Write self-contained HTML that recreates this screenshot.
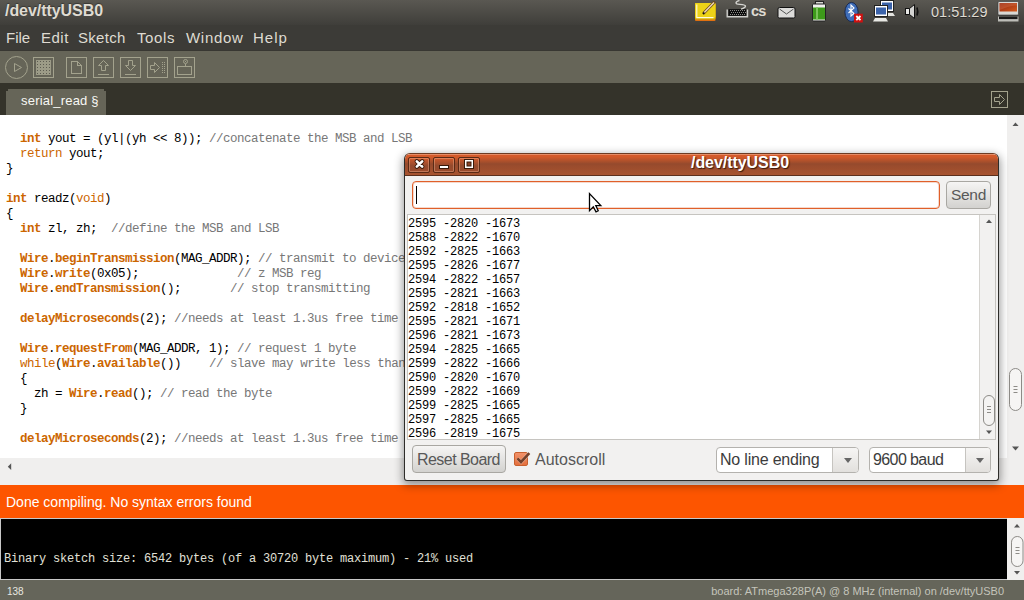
<!DOCTYPE html>
<html><head><meta charset="utf-8">
<style>
*{margin:0;padding:0;box-sizing:border-box}
html,body{width:1024px;height:600px;overflow:hidden;background:#fff;font-family:"Liberation Sans",sans-serif}
.a{position:absolute}
#panel{left:0;top:0;width:1024px;height:25px;background:linear-gradient(#5a5852,#3f3e3a)}
#menubar{left:0;top:25px;width:1024px;height:26px;background:linear-gradient(#3c3b37 25px,#383732 25px)}
#toolbar{left:0;top:51px;width:1024px;height:32px;background:#666558}
#tabbar{left:0;top:83px;width:1024px;height:32px;background:#34332a}
#tab{left:6px;top:89px;width:100px;height:26px;background:#666558;clip-path:polygon(2px 0,98px 0,98px 2px,100px 2px,100px 26px,0 26px,0 2px,2px 2px)}
#editor{left:0;top:115px;width:1007px;height:343px;background:#fff;overflow:hidden}
#vscroll{left:1007px;top:115px;width:17px;height:370px;background:#f0efee}
#hscroll{left:0;top:458px;width:1007px;height:27px;background:#f0efee}
#status{left:0;top:485px;width:1024px;height:33px;background:#fd5500}
#console{left:0;top:518px;width:1007px;height:62px;background:#000;border:1px solid #c8c8c8;border-right:none}
#cscroll{left:1007px;top:518px;width:17px;height:62px;background:#f0efee}
#sbar{left:0;top:580px;width:1024px;height:20px;background:#65655a}
.t{white-space:pre;position:absolute}
.menu{color:#dfdbd2;font-size:15px;top:29px}
.code{font-family:"Liberation Mono",monospace;font-size:12.5px;letter-spacing:-0.5px;line-height:15px;color:#000}
.kb{color:#cc6600;font-weight:bold}
.kw{color:#cc6600}
.cm{color:#777}

.mono{font-family:"Liberation Mono",monospace;font-size:12px;letter-spacing:-0.2px;color:#000;white-space:pre}
.wb{top:157px;width:22px;height:16px;border:1px solid #5a2a16;border-radius:2px;box-shadow:inset 0 0 0 1px rgba(255,200,170,.35);background:linear-gradient(#d35a2c,#944a2d 55%,#9d4c2d)}
.btn{border:1px solid #a9a7a2;border-radius:4px;background:linear-gradient(#f6f5f4,#d3d2cf)}
.btxt{font-size:14.5px;color:#585858}
.combo{border:1px solid #b4b2ae;border-radius:4px;background:#fff}
.cdiv{border-left:1px solid #c6c4c0;background:linear-gradient(#f6f5f4,#e2e0dd);border-radius:0 3px 3px 0}
.ctxt{font-size:14.5px;color:#3c3c3c}
</style></head><body>
<div id="panel" class="a"></div>
<div class="t" style="left:5px;top:2px;color:#dfdbd2;font-size:16px;font-weight:bold;letter-spacing:-0.05px;text-shadow:0 -1px 1px rgba(0,0,0,.35)">/dev/ttyUSB0</div>

<svg class="a" style="left:690px;top:0" width="334" height="25">
<!-- notes -->
<rect x="5" y="3" width="20.5" height="18" rx="1" fill="#e07010"/>
<rect x="5" y="3" width="20.5" height="16.6" rx="1" fill="#d4b800"/>
<rect x="5" y="3" width="20.5" height="15" rx="1" fill="#ecd318"/>
<path d="M6.8 4.5 V17.6 H23.5" fill="none" stroke="#fffbe0" stroke-width="1.1"/>
<path d="M14 12.8 L24 2.5" stroke="#6b4a1a" stroke-width="3" stroke-linecap="round"/>
<path d="M14 12.8 L24 2.5" stroke="#eed8b8" stroke-width="1.5"/>
<path d="M13 14 L14.3 12.6" stroke="#111" stroke-width="1.5"/>
<!-- keyboard -->
<path d="M37.2 9.5 V16.8 H57.5 V9.5" fill="none" stroke="#d0d0cc" stroke-width="1.4"/>
<rect x="38.5" y="9.2" width="17.6" height="6.6" fill="#0c0c0c"/>
<g fill="#8a8a86"><rect x="40" y="10" width="1" height="1"/><rect x="42" y="10" width="1" height="1"/><rect x="44" y="10" width="1" height="1"/><rect x="46" y="10" width="1" height="1"/><rect x="48" y="10" width="1" height="1"/><rect x="50" y="10" width="1" height="1"/><rect x="52" y="10" width="1" height="1"/><rect x="54" y="10" width="1" height="1"/><rect x="41" y="12" width="1" height="1"/><rect x="43" y="12" width="1" height="1"/><rect x="45" y="12" width="1" height="1"/><rect x="47" y="12" width="1" height="1"/><rect x="49" y="12" width="1" height="1"/><rect x="51" y="12" width="1" height="1"/><rect x="53" y="12" width="1" height="1"/><rect x="55" y="12" width="1" height="1"/><rect x="40" y="14" width="1" height="1"/><rect x="42" y="14" width="1" height="1"/><rect x="44" y="14" width="1" height="1"/><rect x="46" y="14" width="1" height="1"/><rect x="48" y="14" width="1" height="1"/><rect x="50" y="14" width="1" height="1"/><rect x="52" y="14" width="1" height="1"/><rect x="54" y="14" width="1" height="1"/></g>
<path d="M51 9.2 C55 8 57 6 54 5 C51 4 46 5 46 3 C46 1.5 48 1 49.5 0.5" fill="none" stroke="#d6d6d2" stroke-width="1.3"/>
<!-- mail -->
<rect x="88" y="7.5" width="17" height="10.5" rx="1.5" fill="#dcdcda" stroke="#111" stroke-width="1"/>
<path d="M89.5 9 L96.5 14 L103.5 9" fill="none" stroke="#555" stroke-width="1"/>
<!-- battery -->
<rect x="125.5" y="1.5" width="8" height="3" fill="#d8d8d4" stroke="#222" stroke-width="1"/>
<rect x="122.5" y="4" width="13" height="17" rx="1" fill="#f0f0ee" stroke="#222" stroke-width="1"/>
<rect x="123" y="7.5" width="12" height="12" fill="#3d9a1a"/>
<rect x="126" y="7.5" width="2" height="12" fill="#7ac25a"/>
<!-- bluetooth -->
<ellipse cx="161.5" cy="12" rx="6.6" ry="9.6" fill="#3e6db8" stroke="#1a2a50" stroke-width="1"/>
<path d="M158.5 8.5 L164 13.5 L161 16 V5 L164 8 L158.5 13" fill="none" stroke="#fff" stroke-width="1.1"/>
<rect x="164" y="13.7" width="8.8" height="8.8" fill="#d01010"/>
<path d="M166.3 16 L170.5 20.2 M170.5 16 L166.3 20.2" stroke="#fff" stroke-width="1.8"/>
<!-- network -->
<rect x="190.5" y="0.5" width="13" height="11" fill="#fff" stroke="#222"/>
<rect x="192" y="2.5" width="10" height="7" fill="#3b63aa"/>
<path d="M192 13h11l2 3h-15z" fill="#e4e4e0"/>
<rect x="184.5" y="5.5" width="13" height="11" fill="#fff" stroke="#222"/>
<rect x="186" y="7.5" width="10" height="7" fill="#3b63aa"/>
<path d="M185 18h11l2 3.5h-15z" fill="#e8e8e4"/>
<!-- volume -->
<rect x="215.5" y="8.5" width="4" height="6" fill="#e8e8e6" stroke="#111"/>
<path d="M219.5 8.5 L224.5 4.5 V18.5 L219.5 14.5 Z" fill="#d4d4d2" stroke="#111"/>
<path d="M227 7.5 Q228.5 11.5 227 15.5" fill="none" stroke="#111" stroke-width="1.6"/>
<!-- session -->
<defs><linearGradient id="sg" x1="0" y1="0" x2="1" y2="1"><stop offset="0" stop-color="#8e2412"/><stop offset="1" stop-color="#d45a1c"/></linearGradient></defs>
<rect x="308" y="1.5" width="20.5" height="13.5" rx="1" fill="#d8d8d4" stroke="#333" stroke-width="0.6"/>
<rect x="309.5" y="3" width="17.5" height="8.5" fill="url(#sg)"/>
<path d="M309.5 3 H327 V5.5 C320 5.5 315 8 309.5 10 Z" fill="#e07a50" opacity="0.35"/>
<rect x="308" y="16.5" width="20.5" height="5" fill="#bdbdb8"/>
<rect x="309" y="16.5" width="18.5" height="2.6" fill="#1a1a1a"/>
</svg>
<div class="t" style="left:751px;top:3px;color:#dfdbd2;font-size:14.5px;font-weight:bold;letter-spacing:-0.9px">cs</div>
<div class="t" style="left:931px;top:4px;color:#dfdbd2;font-size:14.5px;text-shadow:0 1px 0 #2a2926">01:51:29</div>
<div id="menubar" class="a"></div>
<div class="t menu" style="left:6px">File</div>
<div class="t menu" style="left:41px;letter-spacing:0.5px">Edit</div>
<div class="t menu" style="left:78px;letter-spacing:0.3px">Sketch</div>
<div class="t menu" style="left:137px;letter-spacing:0.6px">Tools</div>
<div class="t menu" style="left:186px;letter-spacing:0.7px">Window</div>
<div class="t menu" style="left:253px;letter-spacing:1px">Help</div>
<div id="toolbar" class="a"></div>
<div id="tabbar" class="a"></div>
<svg class="a" style="left:0;top:0" width="200" height="83">
<g fill="none" stroke="#a3a28d" stroke-width="1" shape-rendering="crispEdges">
<rect x="33.5" y="57.5" width="20" height="20"/>
<rect x="66.5" y="57.5" width="20" height="20"/>
<rect x="93.5" y="57.5" width="20" height="20"/>
<rect x="120.5" y="57.5" width="20" height="20"/>
<rect x="147.5" y="57.5" width="20" height="20"/>
<rect x="174.5" y="57.5" width="20" height="20"/>
<path d="M71.5 61.5H77.5V65.5H81.5V73.5H71.5Z"/>
<path d="M98 74.5H109M125 74.5H136"/>
<rect x="177.5" y="66.5" width="14" height="8"/>
<path d="M185.5 63.5V66"/>
</g>
<g fill="none" stroke="#a3a28d" stroke-width="1">
<circle cx="16.5" cy="67.5" r="11"/>
<path d="M14.5 63.5L21.5 67.5L14.5 71.5Z"/>
<path d="M77.5 61.5L81.5 65.5"/>
<path d="M101.5 70.5V65.5H98.5L103.5 60.5L108.5 65.5H105.5V70.5Z"/>
<path d="M128.5 60.5H132.5V65.5H135.5L130.5 70.5L125.5 65.5H128.5Z"/>
<path d="M150.5 65.5H154.5V62.5L159.5 67.5L154.5 72.5V69.5H150.5Z"/>
<circle cx="185.5" cy="61.5" r="2"/>
</g>
<rect x="36" y="60" width="15" height="15" fill="#9c9b87"/>
<g fill="#5e5d52"><rect x="37" y="61" width="1" height="1"/><rect x="37" y="64" width="1" height="1"/><rect x="37" y="67" width="1" height="1"/><rect x="37" y="70" width="1" height="1"/><rect x="37" y="73" width="1" height="1"/><rect x="40" y="61" width="1" height="1"/><rect x="40" y="64" width="1" height="1"/><rect x="40" y="67" width="1" height="1"/><rect x="40" y="70" width="1" height="1"/><rect x="40" y="73" width="1" height="1"/><rect x="43" y="61" width="1" height="1"/><rect x="43" y="64" width="1" height="1"/><rect x="43" y="67" width="1" height="1"/><rect x="43" y="70" width="1" height="1"/><rect x="43" y="73" width="1" height="1"/><rect x="46" y="61" width="1" height="1"/><rect x="46" y="64" width="1" height="1"/><rect x="46" y="67" width="1" height="1"/><rect x="46" y="70" width="1" height="1"/><rect x="46" y="73" width="1" height="1"/><rect x="49" y="61" width="1" height="1"/><rect x="49" y="64" width="1" height="1"/><rect x="49" y="67" width="1" height="1"/><rect x="49" y="70" width="1" height="1"/><rect x="49" y="73" width="1" height="1"/></g>
<g fill="#a3a28d"><rect x="162" y="62" width="1" height="1"/><rect x="162" y="64" width="1" height="1"/><rect x="162" y="66" width="1" height="1"/><rect x="162" y="68" width="1" height="1"/><rect x="162" y="70" width="1" height="1"/><rect x="162" y="72" width="1" height="1"/><rect x="164" y="62" width="1" height="1"/><rect x="164" y="64" width="1" height="1"/><rect x="164" y="66" width="1" height="1"/><rect x="164" y="68" width="1" height="1"/><rect x="164" y="70" width="1" height="1"/><rect x="164" y="72" width="1" height="1"/><rect x="185" y="61" width="1" height="1"/></g>
</svg>
<svg class="a" style="left:985px;top:85px" width="30" height="30">
<g fill="none" stroke="#a3a28d" stroke-width="1" shape-rendering="crispEdges"><rect x="6.5" y="6.5" width="16" height="16"/></g>
<path d="M9.5 12.5H14.5V9.5L19.5 14.5L14.5 19.5V16.5H9.5Z" fill="none" stroke="#a3a28d"/>
</svg>

<div id="tab" class="a"></div>
<div class="t" style="left:21px;top:93px;color:#f8f8f4;font-size:13px;letter-spacing:0.2px">serial_read §</div>
<div id="editor" class="a">
<div class="t code" style="left:6px;top:17px">  <span class="kb">int</span> yout = (yl|(yh &lt;&lt; 8)); <span class="cm">//concatenate the MSB and LSB</span>
  <span class="kw">return</span> yout;
}

<span class="kb">int</span> readz(<span class="kw">void</span>)
{
  <span class="kb">int</span> zl, zh;  <span class="cm">//define the MSB and LSB</span>

  <span class="kb">Wire</span>.<span class="kb">beginTransmission</span>(MAG_ADDR); <span class="cm">// transmit to device 0x0E</span>
  <span class="kb">Wire</span>.<span class="kb">write</span>(0x05);              <span class="cm">// z MSB reg</span>
  <span class="kb">Wire</span>.<span class="kb">endTransmission</span>();       <span class="cm">// stop transmitting</span>

  <span class="kb">delayMicroseconds</span>(2); <span class="cm">//needs at least 1.3us free time between start and stop</span>

  <span class="kb">Wire</span>.<span class="kb">requestFrom</span>(MAG_ADDR, 1); <span class="cm">// request 1 byte</span>
  <span class="kw">while</span>(<span class="kb">Wire</span>.<span class="kb">available</span>())    <span class="cm">// slave may write less than requested</span>
  {
    zh = <span class="kb">Wire</span>.<span class="kb">read</span>(); <span class="cm">// read the byte</span>
  }

  <span class="kb">delayMicroseconds</span>(2); <span class="cm">//needs at least 1.3us free time between start and stop</span>
</div>
</div>
<div id="vscroll" class="a"></div>
<div id="hscroll" class="a"></div>
<svg class="a" style="left:1007px;top:115px" width="17" height="370">
 <path d="M5.5 11 L11.5 11 L8.5 7.5 Z" fill="#555"/>
 <path d="M5 331.5 L12 331.5 L8.5 335.5 Z" fill="#555"/>
 <rect x="2.5" y="253.5" width="12" height="42" rx="6" fill="#f6f5f4" stroke="#8d8b87"/>
 <path d="M6.5 271.5h4M6.5 274.5h4M6.5 277.5h4" stroke="#8d8b87"/>
</svg>
<svg class="a" style="left:0;top:458px" width="30" height="27"><path d="M7.8 8.7 L11.2 5.3 L11.2 12.1 Z" fill="#555"/></svg>

<div id="status" class="a"></div>
<div class="t" style="left:6px;top:494px;color:#fff;font-size:14px">Done compiling. No syntax errors found</div>
<div id="console" class="a"></div>
<div class="t code" style="left:4px;top:552px;color:#e0e0d8;font-size:12px;letter-spacing:-0.2px">Binary sketch size: 6542 bytes (of a 30720 byte maximum) - 21% used</div>
<div id="cscroll" class="a"></div>
<svg class="a" style="left:1007px;top:518px" width="17" height="62">
 <path d="M7 9.5 L13 9.5 L10 6 Z" fill="#555"/>
 <path d="M7 53 L13 53 L10 56.5 Z" fill="#555"/>
 <rect x="4.5" y="18.5" width="11.5" height="30" rx="5.7" fill="#f6f5f4" stroke="#8d8b87"/>
 <path d="M8.5 29.5h4M8.5 32.5h4M8.5 35.5h4" stroke="#8d8b87"/>
</svg>

<div id="sbar" class="a"></div>
<div class="t" style="left:7px;top:586px;color:#e8e8e0;font-size:10px">138</div>
<div class="t" style="right:20px;top:585px;color:#c4c4ba;font-size:11px">board: ATmega328P(A) @ 8 MHz (internal) on /dev/ttyUSB0</div>

<!-- serial monitor -->
<div class="a" style="left:404px;top:153px;width:595px;height:328px;border-radius:6px 6px 3px 3px;box-shadow:0 3px 10px 1px rgba(0,0,0,.42);background:#f2f1f0;border:1px solid #2e2d2a;border-top-color:#6e3c24"></div>
<div class="a" style="left:405px;top:154px;width:593px;height:22px;border-radius:5px 5px 0 0;background:linear-gradient(#e58c66 0px,#e58c66 1px,#d65a2a 1px,#d25a2a 3px,#944a2d 10px,#984b2d 11px,#a7532f 21px,#5c2f1c 21px)"></div>
<div class="t" style="left:691px;top:154px;color:#fff;font-size:16px;font-weight:bold;letter-spacing:-0.05px;text-shadow:1px 1px 1px #3a1a0a">/dev/ttyUSB0</div>
<div class="a wb" style="left:408px"></div>
<div class="a wb" style="left:433px"></div>
<div class="a wb" style="left:458px"></div>
<svg class="a" style="left:404px;top:153px" width="80" height="23">
 <path d="M12.8 8.3 L18.2 13.7 M18.2 8.3 L12.8 13.7" stroke="#3a1a0a" stroke-width="4.4" stroke-linecap="round"/>
 <path d="M12.8 8.3 L18.2 13.7 M18.2 8.3 L12.8 13.7" stroke="#fff" stroke-width="2.6" stroke-linecap="round"/>
 <rect x="35" y="12" width="10" height="4" fill="#3a1a0a"/>
 <rect x="36" y="13" width="8" height="2" fill="#fff"/>
 <rect x="60" y="6" width="10" height="10" fill="#3a1a0a"/>
 <rect x="61" y="7" width="8" height="8" fill="#fff"/>
 <rect x="62.5" y="8.5" width="5" height="5" fill="#3a1a0a"/>
 <rect x="63.5" y="9.5" width="3" height="3" fill="#8a4428"/>
</svg>
<div class="a" style="left:412px;top:181px;width:528px;height:28px;border:1px solid #e0602a;border-radius:4px;background:#fff;box-shadow:inset 0 0 0 1px #f6d8cc"></div>
<div class="a" style="left:416px;top:186px;width:1px;height:18px;background:#000"></div>
<div class="a btn" style="left:946px;top:181px;width:45px;height:28px"></div>
<div class="t btxt" style="left:951px;top:186px;font-size:15.5px;letter-spacing:-0.3px">Send</div>
<div class="a" style="left:407px;top:214px;width:589px;height:226px;background:#fff;border:1px solid #c6c4c0"></div>
<div class="t mono" style="left:408px;top:217px;line-height:14px">2595 -2820 -1673
2588 -2822 -1670
2592 -2825 -1663
2595 -2826 -1677
2594 -2822 -1657
2595 -2821 -1663
2592 -2818 -1652
2595 -2821 -1671
2596 -2821 -1673
2594 -2825 -1665
2599 -2822 -1666
2590 -2820 -1670
2599 -2822 -1669
2599 -2825 -1665
2597 -2825 -1665
2596 -2819 -1675</div>
<div class="a" style="left:979px;top:215px;width:16px;height:224px;background:#f2f1f0;border-left:1px solid #d6d4d0"></div>
<svg class="a" style="left:979px;top:215px" width="17" height="224">
 <path d="M7 8 L13 8 L10 4.5 Z" fill="#555"/>
 <path d="M7 215.5 L13 215.5 L10 219 Z" fill="#555"/>
 <rect x="4.5" y="180.5" width="11" height="30" rx="5.5" fill="#f4f3f2" stroke="#8d8b87"/>
 <path d="M8 191.5h4M8 194.5h4M8 197.5h4" stroke="#8d8b87"/>
</svg>
<div class="a btn" style="left:412px;top:445px;width:94px;height:28px"></div>
<div class="t btxt" style="left:417px;top:451px;font-size:16px;letter-spacing:-0.55px">Reset Board</div>
<div class="a" style="left:514px;top:452px;width:14px;height:14px;border:1px solid #c8602e;border-radius:2px;background:linear-gradient(#f2926a,#e4703e)"></div>
<svg class="a" style="left:514px;top:448px" width="20" height="20"><path d="M3.4 10.3 L7 14 L15.3 5.2" fill="none" stroke="#fbe8dc" stroke-width="3.8" stroke-opacity=".5"/><path d="M3.4 10.3 L7 14 L15.3 5.2" fill="none" stroke="#74402a" stroke-width="2.6"/></svg>
<div class="t btxt" style="left:535px;top:451px;font-size:16px;letter-spacing:0px">Autoscroll</div>
<div class="a combo" style="left:716px;top:447px;width:143px;height:26px"></div>
<div class="a cdiv" style="left:832px;top:448px;width:26px;height:24px"></div>
<div class="t ctxt" style="left:720px;top:451px;font-size:16px;letter-spacing:-0.2px">No line ending</div>
<div class="a combo" style="left:869px;top:447px;width:122px;height:26px"></div>
<div class="a cdiv" style="left:965px;top:448px;width:25px;height:24px"></div>
<div class="t ctxt" style="left:873px;top:451px;font-size:16px;letter-spacing:-0.6px">9600 baud</div>
<svg class="a" style="left:832px;top:447px" width="160" height="26"><path d="M12 11h8l-4 5z" fill="#666"/><path d="M144 11h8l-4 5z" fill="#666"/></svg>
<svg class="a" style="left:586px;top:191px" width="20" height="24"><path d="M3.5 2.6 L3.5 19.6 L7.3 15.8 L10 20.8 L12.2 19.8 L9.8 14.6 L14.8 14.6 Z" fill="#fff" stroke="#000" stroke-width="1.3" stroke-linejoin="miter"/></svg>
</body></html>
